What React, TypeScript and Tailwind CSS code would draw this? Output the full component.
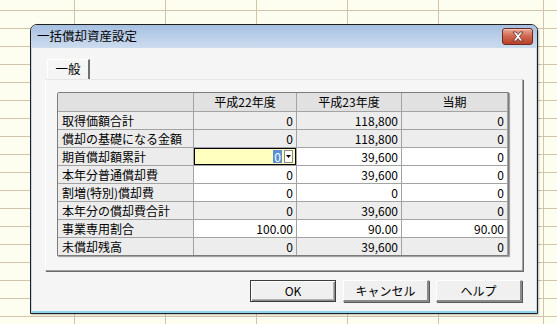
import type { FC } from "react";

type Row = {
  label: string;
  values: string[];
  readOnly: boolean;
  focus?: boolean;
};

const rows: Row[] = [
  { label: "取得価額合計", values: ["0", "118,800", "0"], readOnly: true },
  { label: "償却の基礎になる金額", values: ["0", "118,800", "0"], readOnly: true },
  { label: "期首償却額累計", values: ["0", "39,600", "0"], readOnly: false, focus: true },
  { label: "本年分普通償却費", values: ["0", "39,600", "0"], readOnly: false },
  { label: "割増(特別)償却費", values: ["0", "0", "0"], readOnly: false },
  { label: "本年分の償却費合計", values: ["0", "39,600", "0"], readOnly: true },
  { label: "事業専用割合", values: ["100.00", "90.00", "90.00"], readOnly: false },
  { label: "未償却残高", values: ["0", "39,600", "0"], readOnly: true },
];

const headers = ["", "平成22年度", "平成23年度", "当期"];

const vLines = [74, 165, 256, 347, 438, 543];
const hLines = Array.from({ length: 18 }, (_, i) => 10 + i * 18);

const SheetBackground: FC = () => (
  <svg className="absolute inset-0" width="557" height="324">
    {vLines.map((x) => (
      <line key={`v${x}`} x1={x + 0.5} y1="0" x2={x + 0.5} y2="324" stroke="#d3c4a9" />
    ))}
    {hLines.map((y) => (
      <line key={`h${y}`} x1="0" y1={y + 0.5} x2="557" y2={y + 0.5} stroke="#d3c4a9" />
    ))}
  </svg>
);

const CloseButton: FC = () => (
  <div className="absolute right-[4px] top-[3px] flex h-[17px] w-[31px] items-center justify-center rounded-[3px] border border-[#6e2a1e] bg-gradient-to-b from-[#e9a998] via-[#d0654c] to-[#b8402a] shadow-[inset_0_1px_0_#f3cabd]">
    <svg width="14" height="11" viewBox="0 0 14 11">
      <path
        d="M2 1 L5 1 L7 3.5 L9 1 L12 1 L8.5 5.5 L12 10 L9 10 L7 7.5 L5 10 L2 10 L5.5 5.5 Z"
        fill="#ffffff"
        stroke="#5a2a22"
        strokeWidth="0.8"
        strokeLinejoin="round"
      />
    </svg>
  </div>
);

const FocusCell: FC<{ value: string }> = ({ value }) => (
  <div className="flex items-center justify-end gap-[2px] border border-black bg-[#ffffc0] pr-[2px]">
    <span className="bg-[#5b8fd6] px-[1px] leading-[13px] text-white">{value}</span>
    <span className="flex h-[13px] w-[9px] items-center justify-center border border-[#8a8a8a] bg-white">
      <svg width="5" height="3" viewBox="0 0 5 3">
        <path d="M0 0 H5 L2.5 3 Z" fill="#000" />
      </svg>
    </span>
  </div>
);

const DataGrid: FC = () => (
  <div className="ml-[11px] mt-[12px] w-[452px] rounded-tl-[2px] border border-[#7c7c7c] shadow-[1px_1px_1px_#9a9a9a]">
    <div className="grid grid-cols-[135px_102px_104px_105px] grid-rows-[18px_repeat(8,17px)] gap-px bg-[#a3a3a3]">
      {headers.map((h, i) => (
        <div key={`h${i}`} className="flex items-center justify-center bg-[#e1e1e1]">
          {h}
        </div>
      ))}
      {rows.map((row) => (
        <div key={row.label} className="contents">
          <div className="flex items-center bg-[#ececec] pl-[4px]">{row.label}</div>
          {row.values.map((v, i) =>
            row.focus && i === 0 ? (
              <FocusCell key={i} value={v} />
            ) : (
              <div
                key={i}
                className={`flex items-center justify-end pr-[3px] ${
                  row.readOnly ? "bg-[#ededed]" : "bg-white"
                }`}
              >
                {v}
              </div>
            ),
          )}
        </div>
      ))}
    </div>
  </div>
);

const Button: FC<{ label: string; isDefault?: boolean }> = ({ label, isDefault }) => (
  <div
    className={`flex h-[22px] w-[86px] items-center justify-center bg-[#f0f0f0] ${
      isDefault
        ? "border border-[#3c3c3c] shadow-[inset_1px_1px_0_#ffffff,inset_-1px_-1px_0_#8a8a8a,inset_-2px_-2px_0_#b0b0b0]"
        : "border-t border-l border-white border-r-2 border-b-2 border-r-[#8a8a8a] border-b-[#8a8a8a] shadow-[1px_1px_0_#5a5a5a]"
    }`}
  >
    {label}
  </div>
);

export default function App() {
  return (
    <div className="relative h-[324px] w-[557px] overflow-hidden bg-[#fdfdf0] font-['Noto_Sans_CJK_JP',sans-serif] text-[12px] leading-none text-black">
      <SheetBackground />
      <div className="absolute left-[30px] top-[24px] flex h-[290px] w-[508px] flex-col overflow-hidden rounded-t-[7px] border border-[#1f1f1f] shadow-[1px_1px_2px_rgba(0,0,0,0.25)]">
        <div className="relative flex h-[23px] shrink-0 items-center bg-gradient-to-b from-[#a7c0e1] to-[#cddcee] pl-[6px] text-[12.5px]">
          一括償却資産設定
          <CloseButton />
        </div>
        <div className="flex flex-1 flex-col border-x border-b-2 border-x-[#c4d9ec] border-b-[#8fd4ee] bg-[#f5f5f5] pl-[13px] pr-[13px]">
          <div className="mt-[11px] flex">
            <div className="ml-[2px] flex h-[20px] w-[43px] items-center justify-center border-l border-t border-l-white border-t-white border-r-2 border-r-[#6f6f6f] bg-[#f5f5f5] text-[12.5px]">
              一般
            </div>
          </div>
          <div className="h-[192px] w-[478px] border-l border-t border-l-white border-t-[#e6e6e6] border-r border-b border-r-[#a0a0a0] border-b-[#a0a0a0] shadow-[1px_1px_0_#6a6a6a] bg-[#f6f6f6]">
            <DataGrid />
          </div>
          <div className="mt-[9px] flex justify-end gap-[7px] pr-[1px]">
            <Button label="OK" isDefault />
            <Button label="キャンセル" />
            <Button label="ヘルプ" />
          </div>
        </div>
      </div>
    </div>
  );
}
